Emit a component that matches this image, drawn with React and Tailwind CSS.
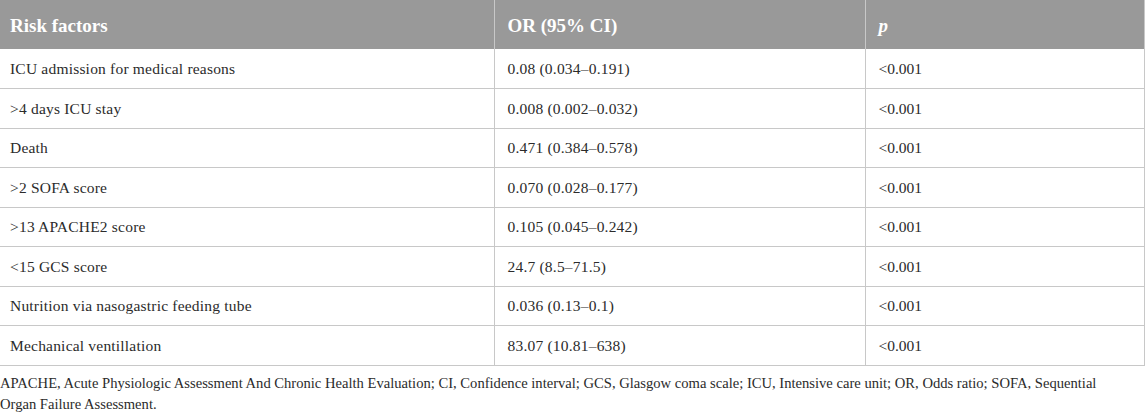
import React from "react";

const rows = [
  ["ICU admission for medical reasons", "0.08 (0.034–0.191)", "<0.001"],
  [">4 days ICU stay", "0.008 (0.002–0.032)", "<0.001"],
  ["Death", "0.471 (0.384–0.578)", "<0.001"],
  [">2 SOFA score", "0.070 (0.028–0.177)", "<0.001"],
  [">13 APACHE2 score", "0.105 (0.045–0.242)", "<0.001"],
  ["<15 GCS score", "24.7 (8.5–71.5)", "<0.001"],
  ["Nutrition via nasogastric feeding tube", "0.036 (0.13–0.1)", "<0.001"],
  ["Mechanical ventillation", "83.07 (10.81–638)", "<0.001"],
];

const serif = "font-['Liberation_Serif',serif]";

export default function App() {
  return (
    <div className={`w-[1145px] bg-white ${serif}`}>
      <table className="w-full table-fixed border-collapse">
        <colgroup>
          <col className="w-[494px]" />
          <col className="w-[371px]" />
          <col />
        </colgroup>
        <thead>
          <tr className="bg-[#999999] text-white text-[19px] font-bold">
            <th className="h-[49px] pl-[10px] pt-[3px] text-left font-bold border-r border-[#c8c8c8]">
              Risk factors
            </th>
            <th className="pl-[13px] pt-[3px] text-left font-bold border-r border-[#c8c8c8]">
              OR (95% CI)
            </th>
            <th className="pl-[13px] pt-[3px] text-left font-bold italic border-r border-[#c8c8c8]">
              p
            </th>
          </tr>
        </thead>
        <tbody className="text-[15.5px] text-[#2b2b2b]">
          {rows.map((r, i) => (
            <tr key={i} className="border-b border-[#c8c8c8]">
              <td className="h-[39.5px] pl-[10px] border-r border-[#c8c8c8] tracking-[0.2px]">
                {r[0]}
              </td>
              <td className="pl-[13px] border-r border-[#c8c8c8] tracking-[0.2px]">{r[1]}</td>
              <td className="pl-[13px] border-r border-[#c8c8c8]">{r[2]}</td>
            </tr>
          ))}
        </tbody>
      </table>
      <p className="mt-[7px] text-[14.6px] leading-[21px] text-[#2b2b2b]">
        APACHE, Acute Physiologic Assessment And Chronic Health Evaluation; CI, Confidence interval; GCS,
        Glasgow coma scale; ICU, Intensive care unit; OR, Odds ratio; SOFA, Sequential
        <br />
        Organ Failure Assessment.
      </p>
    </div>
  );
}
